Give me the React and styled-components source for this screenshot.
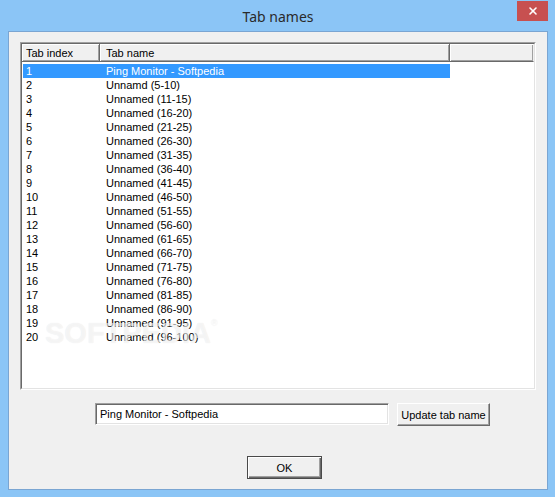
import React from 'react'
import styled, { createGlobalStyle } from 'styled-components'
import { X } from 'lucide-react'

const GlobalStyle = createGlobalStyle`
  html, body {
    margin: 0;
    padding: 0;
  }
  body {
    font-family: 'Liberation Sans', Arial, sans-serif;
    font-size: 11px;
    color: #000;
  }
`

const Window = styled.div`
  width: 555px;
  height: 497px;
  box-sizing: border-box;
  background: #8bc5f6;
  padding: 0 7px 7px 8px;
  display: flex;
  flex-direction: column;
`

const TitleBar = styled.div`
  height: 31px;
  display: grid;
  grid-template-columns: 1fr auto 1fr;
`

const Title = styled.div`
  grid-column: 2;
  align-self: center;
  font-family: 'Noto Sans', 'Open Sans', sans-serif;
  font-size: 14px;
  color: #2a2a2a;
  margin-top: 1px;
`

const CloseButton = styled.div`
  grid-column: 3;
  justify-self: end;
  width: 31px;
  height: 20px;
  margin-top: 1px;
  background: #c75050;
  display: flex;
  align-items: center;
  justify-content: center;
  color: #fff;
`

const Client = styled.div`
  flex: 1;
  background: #f0f0f0;
  border: 1px solid #7aa5d2;
  padding: 10px 11px 0 11px;
  display: flex;
  flex-direction: column;
`

const ListOuter = styled.div`
  height: 348px;
  box-sizing: border-box;
  border-top: 1px solid #a0a0a0;
  border-left: 1px solid #a0a0a0;
  border-right: 1px solid #fff;
  border-bottom: 1px solid #fff;
`

const ListInner = styled.div`
  height: 100%;
  box-sizing: border-box;
  background: #fff;
  border-top: 1px solid #696969;
  border-left: 1px solid #696969;
  border-right: 1px solid #e3e3e3;
  border-bottom: 1px solid #e3e3e3;
  position: relative;
  overflow: hidden;
`

const Header = styled.div`
  display: flex;
  height: 18px;
  background: #f0f0f0;
`

const HeaderCell = styled.div`
  box-sizing: border-box;
  width: ${p => p.width ? `${p.width}px` : 'auto'};
  flex: ${p => p.width ? 'none' : 1};
  padding: 1px 0 0 ${p => p.pad || 0}px;
  line-height: 17px;
  border-right: 1px solid ${p => p.last ? 'transparent' : '#696969'};
  border-bottom: 1px solid #696969;
  box-shadow: inset 1px 1px #fff, inset -1px -1px #a0a0a0;
  white-space: nowrap;
`

const Rows = styled.div`
  padding-top: 2px;
`

const Row = styled.div`
  display: flex;
  width: 427px;
  margin-left: 1px;
  height: 14px;
  line-height: 14px;
  background: ${p => p.selected ? '#3399ff' : 'transparent'};
  color: ${p => p.selected ? '#fff' : '#000'};
`

const Cell = styled.div`
  box-sizing: border-box;
  width: ${p => p.width}px;
  padding-left: ${p => p.pad}px;
  white-space: nowrap;
`

const Watermark = styled.div`
  position: absolute;
  left: 23px;
  top: 275px;
  font-size: 29px;
  font-weight: bold;
  line-height: 1;
  color: rgba(255, 255, 255, 0.6);
  text-shadow: 0 0 1px rgba(0, 0, 0, 0.1);
  pointer-events: none;

  sup {
    font-size: 9px;
    font-weight: normal;
    vertical-align: top;
  }
`

const EditRow = styled.div`
  display: flex;
  gap: 8px;
  margin-top: 13px;
  padding-left: 75px;
`

const TextBox = styled.div`
  box-sizing: border-box;
  width: 294px;
  height: 22px;
  background: #fff;
  border-top: 1px solid #a0a0a0;
  border-left: 1px solid #a0a0a0;
  border-right: 1px solid #fff;
  border-bottom: 1px solid #fff;
  box-shadow: inset 1px 1px #696969, inset -1px -1px #e3e3e3;
  padding-left: 4px;
  line-height: 20px;
`

const Button = styled.div`
  box-sizing: border-box;
  width: ${p => p.width}px;
  height: 23px;
  background: #f0f0f0;
  display: flex;
  align-items: center;
  justify-content: center;
  border: 1px solid;
  border-color: ${p => p.primary ? '#4a4a4a' : '#fff #696969 #696969 #fff'};
  box-shadow: ${p => p.primary
    ? 'inset 1px 1px #fff, inset -1px -1px #696969, inset -2px -2px #a0a0a0'
    : 'inset -1px -1px #a0a0a0'};
`

const OkRow = styled.div`
  display: flex;
  margin-top: 30px;
  padding-left: 227px;
`

const rows = [
  'Ping Monitor - Softpedia',
  'Unnamd (5-10)',
  ...Array.from({ length: 18 }, (_, i) => {
    const from = 11 + i * 5
    return `Unnamed (${from}-${from + 4})`
  }),
]

export default function App() {
  return (
    <>
      <GlobalStyle />
      <Window>
        <TitleBar>
          <Title>Tab names</Title>
          <CloseButton>
            <X size={12} strokeWidth={3.2} />
          </CloseButton>
        </TitleBar>
        <Client>
          <ListOuter>
            <ListInner>
              <Header>
                <HeaderCell width={78} pad={4}>Tab index</HeaderCell>
                <HeaderCell width={350} pad={6}>Tab name</HeaderCell>
                <HeaderCell last />
              </Header>
              <Rows>
                {rows.map((name, i) => (
                  <Row key={i} selected={i === 0}>
                    <Cell width={77} pad={3}>{i + 1}</Cell>
                    <Cell width={350} pad={6}>{name}</Cell>
                  </Row>
                ))}
              </Rows>
              <Watermark>SOFTPEDIA<sup>®</sup></Watermark>
            </ListInner>
          </ListOuter>
          <EditRow>
            <TextBox>Ping Monitor - Softpedia</TextBox>
            <Button width={93}>Update tab name</Button>
          </EditRow>
          <OkRow>
            <Button width={75} primary>OK</Button>
          </OkRow>
        </Client>
      </Window>
    </>
  )
}
